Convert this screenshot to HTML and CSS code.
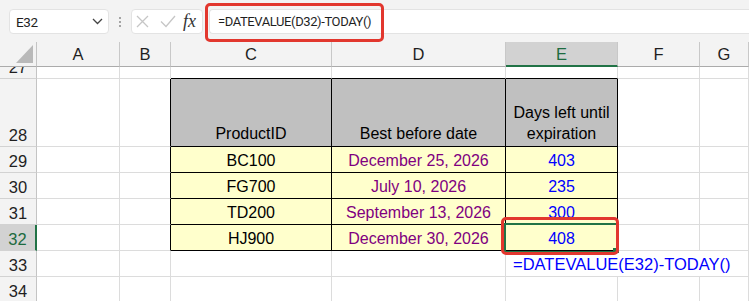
FILE: index.html
```html
<!DOCTYPE html>
<html>
<head>
<meta charset="utf-8">
<link rel="stylesheet" href="styles.css">
</head>
<body>
<div class="topbar">
  <div class="namebox">
    <span class="nb-text">E32</span>
    <svg class="chev" width="11" height="7" viewBox="0 0 11 7"><polyline points="1,1 5.5,5.5 10,1" fill="none" stroke="#444" stroke-width="1.3"/></svg>
  </div>
  <div class="dots"><span></span><span></span><span></span></div>
  <div class="fxbox">
    <svg class="ico-x" width="13" height="13" viewBox="0 0 13 13"><path d="M1 1 L12 12 M12 1 L1 12" stroke="#c6c6c6" stroke-width="1.3" fill="none"/></svg>
    <svg class="ico-check" width="16" height="13" viewBox="0 0 16 13"><polyline points="1,6.5 6,11.5 15,1" fill="none" stroke="#c6c6c6" stroke-width="1.3"/></svg>
    <span class="fx">fx</span>
  </div>
  <div class="formula">=DATEVALUE(D32)-TODAY()</div>
</div>
<div class="callout callout-bar"></div>

<div class="sheet">
  <!-- header row -->
  <div class="corner"><svg width="18" height="19" viewBox="0 0 18 19"><polygon points="17,0 17,18 0,18" fill="#b9b9b9"/></svg></div>
  <div class="ch">A</div>
  <div class="ch">B</div>
  <div class="ch">C</div>
  <div class="ch">D</div>
  <div class="ch ch-sel">E</div>
  <div class="ch">F</div>
  <div class="ch">G</div>

  <!-- row 27 -->
  <div class="rh">27</div>
  <div class="c"></div>
  <div class="c"></div>
  <div class="c tb"></div>
  <div class="c tb"></div>
  <div class="c tb"></div>
  <div class="c"></div>
  <div class="c"></div>

  <!-- row 28 -->
  <div class="rh">28</div>
  <div class="c"></div>
  <div class="c lb"></div>
  <div class="c t hd">ProductID</div>
  <div class="c t hd">Best before date</div>
  <div class="c t hd">Days left until expiration</div>
  <div class="c"></div>
  <div class="c"></div>

  <!-- row 29 -->
  <div class="rh">29</div>
  <div class="c"></div>
  <div class="c lb"></div>
  <div class="c t dt">BC100</div>
  <div class="c t dt date">December 25, 2026</div>
  <div class="c t dt num">403</div>
  <div class="c"></div>
  <div class="c"></div>

  <!-- row 30 -->
  <div class="rh">30</div>
  <div class="c"></div>
  <div class="c lb"></div>
  <div class="c t dt">FG700</div>
  <div class="c t dt date">July 10, 2026</div>
  <div class="c t dt num">235</div>
  <div class="c"></div>
  <div class="c"></div>

  <!-- row 31 -->
  <div class="rh">31</div>
  <div class="c"></div>
  <div class="c lb"></div>
  <div class="c t dt">TD200</div>
  <div class="c t dt date">September 13, 2026</div>
  <div class="c t dt num">300</div>
  <div class="c"></div>
  <div class="c"></div>

  <!-- row 32 -->
  <div class="rh rh-sel">32</div>
  <div class="c"></div>
  <div class="c lb"></div>
  <div class="c t dt">HJ900</div>
  <div class="c t dt date">December 30, 2026</div>
  <div class="c t dt num active">408<span class="selbox"></span><span class="handle"></span><span class="callout callout-cell"></span></div>
  <div class="c"></div>
  <div class="c"></div>

  <!-- row 33 -->
  <div class="rh">33</div>
  <div class="c"></div>
  <div class="c"></div>
  <div class="c"></div>
  <div class="c"></div>
  <div class="c overflow"><span class="note">=DATEVALUE(E32)-TODAY()</span></div>
  <div class="c nr"></div>
  <div class="c"></div>

  <!-- row 34 -->
  <div class="rh">34</div>
  <div class="c"></div>
  <div class="c"></div>
  <div class="c"></div>
  <div class="c"></div>
  <div class="c"></div>
  <div class="c"></div>
  <div class="c"></div>
</div>
</body>
</html>
```

FILE: styles.css
```css
html, body {
  margin: 0;
  padding: 0;
}
body {
  width: 749px;
  height: 301px;
  overflow: hidden;
  position: relative;
  background: #ffffff;
  font-family: "Liberation Sans", Arial, sans-serif;
}

/* ---------- top bar ---------- */
.topbar {
  display: flex;
  align-items: flex-start;
  height: 42px;
  box-sizing: border-box;
  padding: 9px 0 0 9px;
  background: #f3f3f3;
  font-family: Roboto, "Liberation Sans", Arial, sans-serif;
  font-size: 13px;
  letter-spacing: -0.4px;
  color: #1f1f1f;
}
.namebox {
  width: 100px;
  height: 25px;
  box-sizing: border-box;
  background: #fff;
  border: 1px solid #e3e3e3;
  border-radius: 4px;
  display: flex;
  align-items: center;
  padding-left: 6px;
  padding-right: 5px;
}
.nb-text {
  flex: 1;
  font-size: 13.5px;
}
.dots {
  width: 22px;
  height: 25px;
  display: flex;
  flex-direction: column;
  align-items: center;
  justify-content: center;
  gap: 2px;
}
.dots span {
  width: 2px;
  height: 2px;
  border-radius: 1px;
  background: #8a8a8a;
}
.fxbox {
  width: 72px;
  height: 25px;
  box-sizing: border-box;
  background: #fff;
  border: 1px solid #e3e3e3;
  border-radius: 4px;
  display: flex;
  align-items: center;
  padding-left: 4px;
  margin-right: 6px;
}
.ico-check {
  margin-left: 11px;
}
.fx {
  margin-left: 7px;
  font-family: "Liberation Serif", "Times New Roman", serif;
  font-style: italic;
  font-size: 18px;
  letter-spacing: 0;
  color: #333;
  line-height: 1;
  margin-top: -2px;
}
.formula {
  flex: 1;
  height: 25px;
  box-sizing: border-box;
  background: #fff;
  border: 1px solid #e3e3e3;
  border-right: none;
  border-radius: 4px 0 0 4px;
  padding-left: 8px;
  display: flex;
  align-items: center;
  white-space: nowrap;
}

/* ---------- callouts (overlays) ---------- */
.callout {
  position: absolute;
  box-sizing: border-box;
  border: 3px solid #e2372e;
  border-radius: 5px;
  pointer-events: none;
}
.callout-bar {
  left: 205px;
  top: 3px;
  width: 179px;
  height: 39px;
}
.callout-cell {
  left: -5px;
  top: -8px;
  width: 118px;
  height: 38px;
  z-index: 3;
}

/* ---------- sheet grid ---------- */
.sheet {
  display: grid;
  grid-template-columns: 37px 83px 51px 161px 174px 112px 82px 1fr;
  grid-template-rows: 25px 12px 68px repeat(6, 26px);
  font-size: 16px;
  color: #000;
}
.sheet > div {
  box-sizing: border-box;
  border-right: 1px solid #dcdcdc;
  border-bottom: 1px solid #dcdcdc;
}
.corner {
  background: #f3f3f3;
  display: flex;
  align-items: flex-end;
  justify-content: flex-end;
  padding: 0 2px 2px 0;
  border-right-color: #c4c4c4 !important;
  border-bottom-color: #ababab !important;
}
.corner svg {
  display: block;
}
.ch {
  background: #f3f3f3;
  display: flex;
  align-items: center;
  justify-content: center;
  line-height: 24px;
  font-size: 16.5px;
  color: #1f1f1f;
  border-right-color: #c8c8c8 !important;
  border-bottom-color: #ababab !important;
}
.ch-sel {
  background: #d2d2d2;
  color: #1d6b40;
  border-bottom: 2px solid #217346 !important;
  padding-top: 1px;
}
.rh {
  background: #f3f3f3;
  display: flex;
  align-items: flex-end;
  justify-content: center;
  line-height: 20px;
  font-size: 16.5px;
  color: #1f1f1f;
  overflow: hidden;
  padding-bottom: 1px;
  border-right-color: #c4c4c4 !important;
  border-bottom-color: #d2d2d2 !important;
}
.rh-sel {
  background: #d2d2d2;
  color: #1d6b40;
  border-right: 2px solid #217346 !important;
}

.c {
  display: flex;
  align-items: flex-end;
  justify-content: center;
  line-height: 20px;
  padding-bottom: 1px;
  white-space: nowrap;
}
.tb {
  border-bottom-color: #000 !important;
}
.lb {
  border-right-color: #000 !important;
}
.t {
  border-right-color: #000 !important;
  border-bottom-color: #000 !important;
}
.hd {
  background: #c0c0c0;
  text-align: center;
  white-space: normal;
  line-height: 20.5px;
  padding: 0 4px 2px 4px;
}
.dt {
  background: #ffffcc;
}
.date {
  color: #800080;
}
.num {
  color: #0000ff;
}
.active {
  position: relative;
}
.selbox {
  position: absolute;
  left: -2px;
  top: -2px;
  width: 115px;
  height: 30px;
  box-sizing: border-box;
  border: 2px solid #217346;
  z-index: 2;
}
.handle {
  position: absolute;
  left: 107px;
  top: 23px;
  width: 5px;
  height: 5px;
  background: #217346;
  z-index: 2;
}
.overflow {
  border-right: none !important;
  justify-content: flex-start;
  overflow: visible;
  padding-left: 7px;
  position: relative;
  z-index: 1;
}
.note {
  color: #0000ff;
  font-size: 16.5px;
  line-height: 20px;
  margin-bottom: 1px;
}
.nr {
  border-right: none !important;
}
```
